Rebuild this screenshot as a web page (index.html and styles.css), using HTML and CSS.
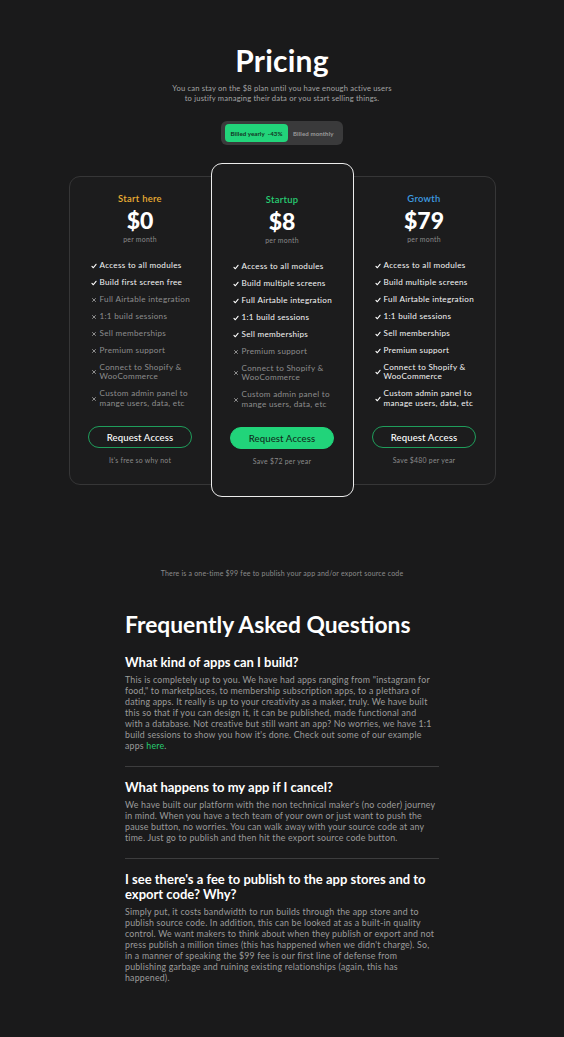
FILE: index.html
```html
<!DOCTYPE html>
<html lang="en">
<head>
<meta charset="utf-8">
<title>Pricing</title>
<link rel="stylesheet" href="styles.css">
</head>
<body>
<main class="page">
  <section class="hero">
    <h1 class="title">Pricing</h1>
    <p class="subtitle">You can stay on the $8 plan until you have enough active users<br>to justify managing their data or you start selling things.</p>
    <div class="toggle">
      <span class="toggle-opt active">Billed yearly &nbsp;-43%</span>
      <span class="toggle-opt">Billed monthly</span>
    </div>
  </section>

  <section class="plans">
    <article class="plan">
      <div class="plan-name orange">Start here</div>
      <div class="price">$0</div>
      <div class="per">per month</div>
      <ul class="features">
        <li class="on"><svg class="ic" viewBox="0 0 10 10"><path d="M1.6 5.6L3.9 7.9L8.4 2.2"/></svg><span>Access to all modules</span></li>
        <li class="on"><svg class="ic" viewBox="0 0 10 10"><path d="M1.6 5.6L3.9 7.9L8.4 2.2"/></svg><span>Build first screen free</span></li>
        <li class="off"><svg class="ic" viewBox="0 0 10 10"><path d="M2.5 2.5L7.5 7.5M7.5 2.5L2.5 7.5"/></svg><span>Full Airtable integration</span></li>
        <li class="off"><svg class="ic" viewBox="0 0 10 10"><path d="M2.5 2.5L7.5 7.5M7.5 2.5L2.5 7.5"/></svg><span>1:1 build sessions</span></li>
        <li class="off"><svg class="ic" viewBox="0 0 10 10"><path d="M2.5 2.5L7.5 7.5M7.5 2.5L2.5 7.5"/></svg><span>Sell memberships</span></li>
        <li class="off"><svg class="ic" viewBox="0 0 10 10"><path d="M2.5 2.5L7.5 7.5M7.5 2.5L2.5 7.5"/></svg><span>Premium support</span></li>
        <li class="off"><svg class="ic" viewBox="0 0 10 10"><path d="M2.5 2.5L7.5 7.5M7.5 2.5L2.5 7.5"/></svg><span>Connect to Shopify &amp;<br>WooCommerce</span></li>
        <li class="off"><svg class="ic" viewBox="0 0 10 10"><path d="M2.5 2.5L7.5 7.5M7.5 2.5L2.5 7.5"/></svg><span>Custom admin panel to<br>mange users, data, etc</span></li>
      </ul>
      <button class="btn outline">Request Access</button>
      <div class="note">It's free so why not</div>
    </article>

    <article class="plan featured">
      <div class="plan-name green">Startup</div>
      <div class="price">$8</div>
      <div class="per">per month</div>
      <ul class="features">
        <li class="on"><svg class="ic" viewBox="0 0 10 10"><path d="M1.6 5.6L3.9 7.9L8.4 2.2"/></svg><span>Access to all modules</span></li>
        <li class="on"><svg class="ic" viewBox="0 0 10 10"><path d="M1.6 5.6L3.9 7.9L8.4 2.2"/></svg><span>Build multiple screens</span></li>
        <li class="on"><svg class="ic" viewBox="0 0 10 10"><path d="M1.6 5.6L3.9 7.9L8.4 2.2"/></svg><span>Full Airtable integration</span></li>
        <li class="on"><svg class="ic" viewBox="0 0 10 10"><path d="M1.6 5.6L3.9 7.9L8.4 2.2"/></svg><span>1:1 build sessions</span></li>
        <li class="on"><svg class="ic" viewBox="0 0 10 10"><path d="M1.6 5.6L3.9 7.9L8.4 2.2"/></svg><span>Sell memberships</span></li>
        <li class="off"><svg class="ic" viewBox="0 0 10 10"><path d="M2.5 2.5L7.5 7.5M7.5 2.5L2.5 7.5"/></svg><span>Premium support</span></li>
        <li class="off"><svg class="ic" viewBox="0 0 10 10"><path d="M2.5 2.5L7.5 7.5M7.5 2.5L2.5 7.5"/></svg><span>Connect to Shopify &amp;<br>WooCommerce</span></li>
        <li class="off"><svg class="ic" viewBox="0 0 10 10"><path d="M2.5 2.5L7.5 7.5M7.5 2.5L2.5 7.5"/></svg><span>Custom admin panel to<br>mange users, data, etc</span></li>
      </ul>
      <button class="btn filled">Request Access</button>
      <div class="note">Save $72 per year</div>
    </article>

    <article class="plan">
      <div class="plan-name blue">Growth</div>
      <div class="price">$79</div>
      <div class="per">per month</div>
      <ul class="features">
        <li class="on"><svg class="ic" viewBox="0 0 10 10"><path d="M1.6 5.6L3.9 7.9L8.4 2.2"/></svg><span>Access to all modules</span></li>
        <li class="on"><svg class="ic" viewBox="0 0 10 10"><path d="M1.6 5.6L3.9 7.9L8.4 2.2"/></svg><span>Build multiple screens</span></li>
        <li class="on"><svg class="ic" viewBox="0 0 10 10"><path d="M1.6 5.6L3.9 7.9L8.4 2.2"/></svg><span>Full Airtable integration</span></li>
        <li class="on"><svg class="ic" viewBox="0 0 10 10"><path d="M1.6 5.6L3.9 7.9L8.4 2.2"/></svg><span>1:1 build sessions</span></li>
        <li class="on"><svg class="ic" viewBox="0 0 10 10"><path d="M1.6 5.6L3.9 7.9L8.4 2.2"/></svg><span>Sell memberships</span></li>
        <li class="on"><svg class="ic" viewBox="0 0 10 10"><path d="M1.6 5.6L3.9 7.9L8.4 2.2"/></svg><span>Premium support</span></li>
        <li class="on"><svg class="ic" viewBox="0 0 10 10"><path d="M1.6 5.6L3.9 7.9L8.4 2.2"/></svg><span>Connect to Shopify &amp;<br>WooCommerce</span></li>
        <li class="on"><svg class="ic" viewBox="0 0 10 10"><path d="M1.6 5.6L3.9 7.9L8.4 2.2"/></svg><span>Custom admin panel to<br>manage users, data, etc</span></li>
      </ul>
      <button class="btn outline">Request Access</button>
      <div class="note">Save $480 per year</div>
    </article>
  </section>

  <p class="fee">There is a one-time $99 fee to publish your app and/or export source code</p>

  <section class="faq">
    <h2 class="faq-title">Frequently Asked Questions</h2>
    <div class="qa">
      <h3 class="q">What kind of apps can I build?</h3>
      <p class="a">This is completely up to you. We have had apps ranging from "instagram for food," to marketplaces, to membership subscription apps, to a plethara of dating apps. It really is up to your creativity as a maker, truly. We have built this so that if you can design it, it can be published, made functional and<br>with a database. Not creative but still want an app? No worries, we have 1:1 build sessions to show you how it's done. Check out some of our example<br>apps <a class="link" href="#">here</a>.</p>
    </div>
    <div class="qa">
      <h3 class="q">What happens to my app if I cancel?</h3>
      <p class="a">We have built our platform with the non technical maker's (no coder) journey in mind. When you have a tech team of your own or just want to push the pause button, no worries. You can walk away with your source code at any time. Just go to publish and then hit the export source code button.</p>
    </div>
    <div class="qa last">
      <h3 class="q">I see there's a fee to publish to the app stores and to export code? Why?</h3>
      <p class="a">Simply put, it costs bandwidth to run builds through the app store and to publish source code. In addition, this can be looked at as a built-in quality control. We want makers to think about when they publish or export and not press publish a million times (this has happened when we didn't charge). So, in a manner of speaking the $99 fee is our first line of defense from publishing garbage and ruining existing relationships (again, this has happened).</p>
    </div>
  </section>
</main>
</body>
</html>
```

FILE: styles.css
```css
* { box-sizing: border-box; }

html, body {
  margin: 0;
  padding: 0;
  background: #1a1a1b;
}

body {
  font-family: Lato, "Noto Sans", sans-serif;
  color: #f2f2f2;
  min-height: 1037px;
}

.page {
  display: flex;
  flex-direction: column;
  align-items: center;
  padding-top: 40px;
  padding-bottom: 40px;
}

.hero {
  display: flex;
  flex-direction: column;
  align-items: center;
}

.title {
  margin: 0;
  font-size: 30px;
  line-height: 40px;
  font-weight: 700;
  color: #ffffff;
  letter-spacing: 0.2px;
}

.subtitle {
  margin: 3px 0 0;
  font-size: 7.6px;
  line-height: 10px;
  letter-spacing: 0.18px;
  color: #a3a3a3;
  text-align: center;
}

.toggle {
  margin-top: 18px;
  display: flex;
  align-items: center;
  width: 122px;
  height: 24px;
  padding: 3px 4px;
  background: #3a3a3b;
  border-radius: 6px;
  gap: 5px;
}

.toggle-opt {
  font-size: 6.1px;
  font-weight: 700;
  letter-spacing: 0.1px;
  color: #9a9a9a;
  white-space: nowrap;
}

.toggle-opt.active {
  display: flex;
  align-items: center;
  justify-content: center;
  width: 63px;
  height: 18px;
  background: #22d47a;
  color: #14321f;
  border-radius: 4px;
}

.plans {
  margin-top: 31px;
  width: 427px;
  display: flex;
  border: 1px solid #363637;
  border-radius: 11px;
  background: #1c1c1d;
}

.plan {
  flex: 1 1 0;
  display: flex;
  flex-direction: column;
  align-items: center;
  padding: 16px 0 17px;
}

.plan.featured {
  margin: -14px 0 -13px;
  padding-top: 30px;
  padding-bottom: 30px;
  border: 1.5px solid #ececec;
  border-radius: 11px;
  background: #1c1c1d;
}

.plan-name {
  font-size: 9.4px;
  line-height: 12px;
  font-weight: 600;
  letter-spacing: 0.3px;
}
.orange { color: #eaae33; }
.green { color: #27cc72; }
.blue { color: #3c9be0; }

.price {
  margin-top: 2px;
  font-size: 23px;
  line-height: 26px;
  font-weight: 900;
  color: #ffffff;
}

.per {
  margin-top: 2px;
  font-size: 6.9px;
  line-height: 9px;
  letter-spacing: 0.25px;
  color: #8a8a8a;
}

.features {
  list-style: none;
  margin: 17px 0 0;
  padding: 0 0 0 21px;
  align-self: stretch;
  display: flex;
  flex-direction: column;
  gap: 7.6px;
}

.features li {
  display: flex;
  align-items: center;
  gap: 3px;
  font-size: 8.1px;
  line-height: 9.4px;
  letter-spacing: 0.3px;
  white-space: nowrap;
}

.features li.on { color: #f4f4f4; }
.features li.off { color: #8d8d8d; }

.ic {
  flex: none;
  width: 6px;
  height: 6px;
  fill: none;
  stroke-linecap: round;
  stroke-linejoin: round;
}
.on .ic { stroke: #ffffff; stroke-width: 1.9; }
.off .ic { stroke: #9a9a9a; stroke-width: 1.5; }

.btn {
  margin-top: 18px;
  width: 104px;
  height: 22px;
  border-radius: 11px;
  font-family: inherit;
  font-size: 9.6px;
  font-weight: 500;
  letter-spacing: 0.1px;
  cursor: pointer;
}

.btn.outline {
  background: transparent;
  border: 1.3px solid #1f9d5b;
  color: #ffffff;
}

.btn.filled {
  background: #21d47a;
  border: 1.3px solid #21d47a;
  color: #10301d;
}

.note {
  margin-top: 8px;
  font-size: 6.9px;
  line-height: 9px;
  letter-spacing: 0.25px;
  color: #8a8a8a;
}

.fee {
  margin: 84px 0 0;
  font-size: 7px;
  line-height: 9px;
  letter-spacing: 0.2px;
  color: #8c8c8c;
}

.faq {
  margin-top: 32px;
  width: 314px;
  display: flex;
  flex-direction: column;
}

.faq-title {
  margin: 0;
  font-size: 22.8px;
  line-height: 28px;
  font-weight: 700;
  color: #ffffff;
}

.qa {
  padding: 13px 0 15px;
  border-bottom: 1px solid #3d3d3e;
}

.qa:first-of-type { padding-top: 17px; }
.qa.last { border-bottom: none; }

.q {
  margin: 0;
  font-size: 13px;
  line-height: 15px;
  font-weight: 700;
  color: #ffffff;
}

.a {
  margin: 4px 0 0;
  font-size: 8.8px;
  line-height: 11px;
  letter-spacing: 0.2px;
  color: #9c9c9c;
}

.link {
  color: #27cc72;
  text-decoration: none;
}
```
